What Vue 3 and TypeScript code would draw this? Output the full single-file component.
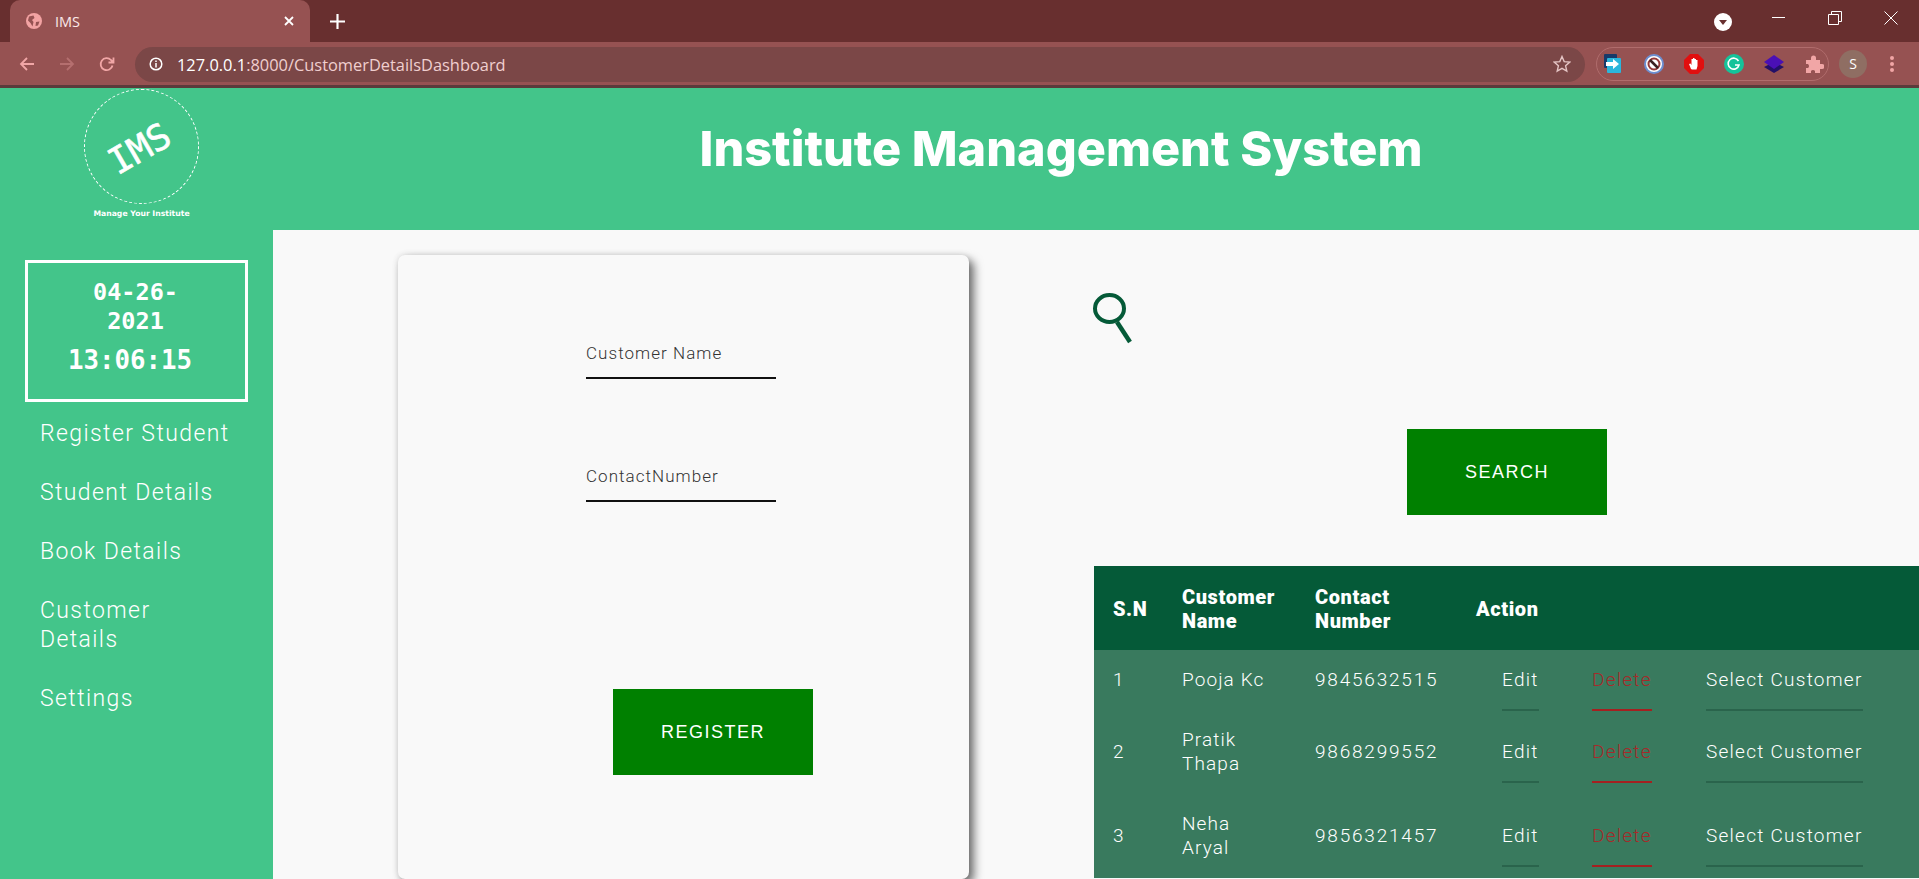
<script setup lang="ts">
interface Customer { sn: number; name: string; phone: string }
const nav: string[] = ['Register Student', 'Student Details', 'Book Details', 'Customer\nDetails', 'Settings']
const customers: Customer[] = [
  { sn: 1, name: 'Pooja Kc', phone: '9845632515' },
  { sn: 2, name: 'Pratik Thapa', phone: '9868299552' },
  { sn: 3, name: 'Neha Aryal', phone: '9856321457' },
]
</script>

<template>
  <div class="window">
    <div class="tabbar">
      <div class="tab">
        <svg class="globe" viewBox="0 0 16 16" width="16" height="16"><circle cx="8" cy="8" r="8" fill="#f3a3a3"/><path d="M3 3.5 L7.5 2.5 L8.5 5 L6 7 L7.5 9 L6.5 13.5 L4.5 10 L2 7.5Z M10 9 L13.5 8.5 L12 12.5 L9.5 13Z" fill="#965252"/></svg>
        <span class="tab-title">IMS</span>
        <svg class="tab-close" viewBox="0 0 10 10" width="10" height="10"><path d="M1 1 L9 9 M9 1 L1 9" stroke="#fff" stroke-width="1.8"/></svg>
      </div>
      <svg class="plus" viewBox="0 0 14 14" width="15" height="15"><path d="M7 0 V14 M0 7 H14" stroke="#fff" stroke-width="2"/></svg>
      <div class="spacer"></div>
      <svg class="profile-drop" viewBox="0 0 18 18" width="18" height="18"><circle cx="9" cy="9" r="9" fill="#fff"/><path d="M5 7 H13 L9 12Z" fill="#682f2f"/></svg>
      <div class="winbtns">
        <svg viewBox="0 0 14 14" width="14" height="14"><path d="M0 6.5 H13" stroke="#fff" stroke-width="1"/></svg>
        <svg viewBox="0 0 14 14" width="14" height="14"><path d="M.5 3.5 H10.5 V13.5 H.5Z M3.5 3.5 V.5 H13.5 V10.5 H10.5" fill="none" stroke="#fff" stroke-width="1"/></svg>
        <svg viewBox="0 0 14 14" width="14" height="14"><path d="M.5 .5 L13.5 13.5 M13.5 .5 L.5 13.5" stroke="#fff" stroke-width="1"/></svg>
      </div>
    </div>
    <div class="toolbar">
      <svg class="tool" viewBox="0 0 16 16" width="16" height="16"><path d="M15 8 H2 M8 2 L2 8 L8 14" fill="none" stroke="#f1a6a6" stroke-width="1.8"/></svg>
      <svg class="tool" viewBox="0 0 16 16" width="16" height="16"><path d="M1 8 H14 M8 2 L14 8 L8 14" fill="none" stroke="#b56f6f" stroke-width="1.8"/></svg>
      <svg class="tool" viewBox="0 0 16 16" width="16" height="16"><path d="M13.5 9.5 A6 6 0 1 1 12 4 L14 6 M14.5 1.5 V6.5 H9.5" fill="none" stroke="#f1a6a6" stroke-width="1.8"/></svg>
      <div class="omnibox">
        <svg viewBox="0 0 14 14" width="14" height="14"><circle cx="7" cy="7" r="5.8" fill="none" stroke="#fff" stroke-width="1.5"/><path d="M7 6 V10.5 M7 3.4 V5" stroke="#fff" stroke-width="1.5"/></svg>
        <span class="url"><span class="url-host">127.0.0.1</span>:8000/CustomerDetailsDashboard</span>
        <svg class="star" viewBox="0 0 18 18" width="18" height="18"><path d="M9 1.5 L11.2 6.6 L16.8 7.1 L12.6 10.8 L13.8 16.2 L9 13.4 L4.2 16.2 L5.4 10.8 L1.2 7.1 L6.8 6.6Z" fill="none" stroke="#e5c5c5" stroke-width="1.4"/></svg>
      </div>
      <div class="ext-pill">
        <svg viewBox="0 0 20 20" width="20" height="20"><rect x="0" y="0" width="13" height="14" rx="1" fill="#173a6a"/><rect x="3" y="4" width="14" height="15" rx="1" fill="#2bb6dc"/><path d="M2 8 H9 V5 L15 10 L9 15 V12 H2Z" fill="#fff"/></svg>
        <svg viewBox="0 0 20 20" width="20" height="20"><circle cx="10" cy="10" r="9" fill="#fff" stroke="#6d8fd1" stroke-width="2"/><circle cx="10" cy="10" r="5.5" fill="none" stroke="#963b3b" stroke-width="2"/><path d="M6 6 L14 14" stroke="#3a2222" stroke-width="2.5"/></svg>
        <svg viewBox="0 0 20 20" width="20" height="20"><path d="M6 0 H14 L20 6 V14 L14 20 H6 L0 14 V6Z" fill="#e10f0f"/><path d="M7 15 L5 10 L6.5 9.5 L7.5 11 V5 H9 V4 H10.5 V5 H12 V6 H13.5 V12 L12.5 15.5 H8Z" fill="#fff"/></svg>
        <svg viewBox="0 0 20 20" width="20" height="20"><circle cx="10" cy="10" r="10" fill="#15c39a"/><path d="M14.5 7 A5.5 5.5 0 1 0 15 11 H11" fill="none" stroke="#fff" stroke-width="1.6"/></svg>
        <svg viewBox="0 0 20 20" width="20" height="20"><path d="M0 13 L10 8 L20 13 L10 19Z" fill="#231068"/><path d="M0 8 L10 1 L20 8 L10 15Z" fill="#4a10b5"/></svg>
        <svg viewBox="0 0 20 20" width="20" height="20"><path d="M2 6 H7 V4 A2.5 2.5 0 0 1 12 4 V6 H16 V10 H18 A2.5 2.5 0 0 1 18 15 H16 V19 H11 V17 A2.5 2.5 0 0 0 7 17 V19 H2 V14 H4 A2.5 2.5 0 0 0 4 10 H2Z" fill="#f1a6a6"/></svg>
      </div>
      <div class="avatar">S</div>
      <svg class="dots" viewBox="0 0 6 18" width="6" height="18"><circle cx="3" cy="3" r="2" fill="#f1a6a6"/><circle cx="3" cy="9" r="2" fill="#f1a6a6"/><circle cx="3" cy="15" r="2" fill="#f1a6a6"/></svg>
    </div>

    <header class="header">
      <div class="brand">
        <div class="logo"><span class="logo-text">IMS</span></div>
        <div class="tagline">Manage Your Institute</div>
      </div>
      <h1 class="title">Institute Management System</h1>
    </header>

    <div class="body">
      <aside class="sidebar">
        <div class="clock">
          <div class="date">04-26-2021</div>
          <div class="time">13:06:15</div>
        </div>
        <nav class="nav">
          <a v-for="item in nav" :key="item">{{ item }}</a>
        </nav>
      </aside>

      <main class="main">
        <section class="card">
          <input class="field" placeholder="Customer Name" />
          <input class="field second" placeholder="ContactNumber" />
          <button class="btn register">REGISTER</button>
        </section>

        <section class="right">
          <svg class="search-icon" viewBox="0 0 40 51" width="40" height="51"><ellipse cx="16.5" cy="15.5" rx="14.5" ry="13.5" fill="none" stroke="#055a38" stroke-width="4"/><path d="M24 29 L37 49" stroke="#055a38" stroke-width="4.5"/></svg>
          <button class="btn search">SEARCH</button>
          <table class="table">
            <colgroup>
              <col class="c1" /><col class="c2" /><col class="c3" /><col class="c4" /><col class="c5" /><col />
            </colgroup>
            <thead>
              <tr>
                <th>S.N</th>
                <th>Customer Name</th>
                <th>Contact Number</th>
                <th>Action</th>
                <th></th>
                <th></th>
              </tr>
            </thead>
            <tbody>
              <tr v-for="c in customers" :key="c.sn">
                <td>{{ c.sn }}</td>
                <td>{{ c.name }}</td>
                <td class="phone">{{ c.phone }}</td>
                <td class="edit-cell"><a class="link">Edit</a></td>
                <td><a class="link del">Delete</a></td>
                <td><a class="link">Select Customer</a></td>
              </tr>
            </tbody>
          </table>
        </section>
      </main>
    </div>
  </div>
</template>

<style>
html, body { margin: 0; padding: 0; overflow: hidden; }
</style>

<style scoped>
.window {
  width: 1919px;
  height: 879px;
  overflow: hidden;
  display: flex;
  flex-direction: column;
  font-family: "Roboto", "Liberation Sans", sans-serif;
  background: #f9f9f9;
}
.tabbar {
  height: 42px;
  flex: none;
  background: #682f2f;
  display: flex;
  align-items: center;
  padding-left: 10px;
  box-sizing: border-box;
}
.tab {
  width: 300px;
  height: 42px;
  background: #965252;
  border-radius: 10px 10px 0 0;
  display: flex;
  align-items: center;
  box-sizing: border-box;
  padding: 0 16px;
  color: #fbe9e9;
}
.tab-title { margin-left: 13px; font: 14.5px "Open Sans", sans-serif; flex: 1; }
.plus { margin-left: 20px; }
.spacer { flex: 1; }
.profile-drop { margin-right: 40px; margin-top: 2px; }
.winbtns { display: flex; gap: 42px; padding-right: 21px; margin-bottom: 6px; }
.toolbar {
  height: 43px;
  flex: none;
  background: #965252;
  display: flex;
  align-items: center;
  padding-left: 19px;
  box-sizing: border-box;
}
.tool { margin-right: 24px; }
.tool:nth-child(3) { margin-right: 20px; }
.omnibox {
  width: 1450px;
  height: 35px;
  box-sizing: border-box;
  border-radius: 18px;
  background: #7b4747;
  display: flex;
  align-items: center;
  padding: 0 14px 0 14px;
  margin-top: 1px;
}
.url { margin-left: 14px; flex: 1; font: 16.4px "Open Sans", sans-serif; color: #f0cfcf; }
.url-host { color: #fff; }
.ext-pill {
  margin-left: 11px;
  width: 233px;
  height: 34px;
  box-sizing: border-box;
  border: 1px solid #b06c6c;
  border-radius: 17px;
  display: flex;
  align-items: center;
  gap: 20px;
  padding: 0 0 0 7px;
}
.avatar {
  margin-left: 10px;
  width: 28px;
  height: 28px;
  border-radius: 50%;
  background: #8f6e63;
  color: #fff;
  font: 14px "Open Sans", sans-serif;
  display: flex;
  align-items: center;
  justify-content: center;
}
.dots { margin-left: 22px; }
.header {
  margin-top: 3px;
  height: 142px;
  flex: none;
  background: #43c58a;
  display: flex;
  box-shadow: 0 -3px 0 #5a3b3b;
}
.brand {
  width: 283px;
  flex: none;
  display: flex;
  flex-direction: column;
  align-items: center;
}
.logo {
  margin-top: 1px;
  width: 115px;
  height: 115px;
  box-sizing: border-box;
  border: 1px dashed #fff;
  border-radius: 50%;
  display: flex;
  align-items: center;
  justify-content: center;
}
.logo-text {
  display: block;
  color: #fff;
  font: 36px "DejaVu Sans Mono", monospace;
  -webkit-text-stroke: 0.6px #fff;
  transform: translate(-2px, 2px) rotate(-30deg);
}
.tagline {
  margin-top: 4px;
  color: #fff;
  font: bold 7.7px/12px "DejaVu Sans", sans-serif;
}
.title {
  flex: 1;
  margin: 0;
  padding-right: 80px;
  padding-bottom: 21px;
  box-sizing: border-box;
  align-self: center;
  text-align: center;
  color: #fff;
  font: 800 48.6px "Inter", "Liberation Sans", sans-serif;
  letter-spacing: 0;
}
.body { flex: 1; display: flex; min-height: 0; }
.sidebar {
  width: 273px;
  flex: none;
  background: #43c58a;
  box-sizing: border-box;
  padding: 30px 25px 0;
}
.clock {
  width: 223px;
  height: 142px;
  box-sizing: border-box;
  border: 3px solid #fff;
  color: #fff;
  text-align: center;
  font-family: "DejaVu Sans Mono", monospace;
  font-weight: bold;
  padding: 15px 46px 0 44px;
}
.date { font-size: 23.5px; line-height: 29px; }
.time { font-size: 25.8px; line-height: 30px; margin: 9px -27px 0 -38px; }
.nav {
  margin-top: 17px;
  padding-left: 15px;
  display: flex;
  flex-direction: column;
  gap: 30px;
}
.nav a {
  color: #fff;
  font-size: 23px;
  font-weight: 300;
  line-height: 29px;
  letter-spacing: 1.4px;
  white-space: pre-line;
}
.main {
  flex: 1;
  display: flex;
  padding: 25px 0 0 125px;
  background: #f9f9f9;
  min-width: 0;
}
.card {
  width: 571px;
  height: 624px;
  flex: none;
  background: #f9f9f9;
  border-radius: 7px;
  box-shadow: 5px 5px 10px rgba(0,0,0,.55), 0 0 6px rgba(0,0,0,.12);
  display: flex;
  flex-direction: column;
  align-items: flex-start;
  padding: 0 0 0 188px;
  box-sizing: border-box;
}
.field {
  margin-top: 84px;
  width: 190px;
  height: 40px;
  padding: 0 0 10px;
  border: 0;
  border-bottom: 2px solid #111;
  background: transparent;
  outline: none;
  box-sizing: border-box;
  font: 300 17px "Roboto", sans-serif;
  letter-spacing: 1.05px;
  color: #222;
}
.field::placeholder { color: #333; opacity: 1; }
.field.second { margin-top: 83px; }
.btn {
  width: 200px;
  height: 86px;
  background: #008000;
  color: #fff;
  border: 0;
  font: 18px "Liberation Sans", sans-serif;
  letter-spacing: 1.5px;
}
.register { margin-top: 187px; margin-left: 27px; }
.right {
  margin-left: 125px;
  flex: 1;
  min-width: 0;
  display: flex;
  flex-direction: column;
  align-items: flex-start;
}
.search-icon { margin-top: 38px; margin-left: -1px; }
.search { margin-top: 85px; margin-left: 313px; }
.table {
  margin-top: 51px;
  width: 825px;
  flex: none;
  table-layout: fixed;
  border-collapse: collapse;
  color: #fff;
  font-size: 19px;
  line-height: 24px;
  background: #397a5e;
}
.c1 { width: 69px; }
.c2 { width: 133px; }
.c3 { width: 161px; }
.c4 { width: 116px; }
.c5 { width: 114px; }
th, td {
  padding: 18px 19px;
  text-align: left;
  vertical-align: middle;
}
th {
  background: #055a38;
  font-weight: 900;
  font-size: 20px;
  letter-spacing: 0.6px;
  padding-top: 19px;
  padding-bottom: 17px;
}
td { font-weight: 300; letter-spacing: 1.1px; }
.phone { letter-spacing: 1.8px; white-space: nowrap; }
.edit-cell { padding-left: 45px; }
.link {
  color: #fff;
  padding-bottom: 18px;
  border-bottom: 2px solid #2a644c;
  white-space: nowrap;
  letter-spacing: 1.25px;
}
.del {
  color: #a52a2a;
  border-bottom-color: #a52020;
}
</style>
